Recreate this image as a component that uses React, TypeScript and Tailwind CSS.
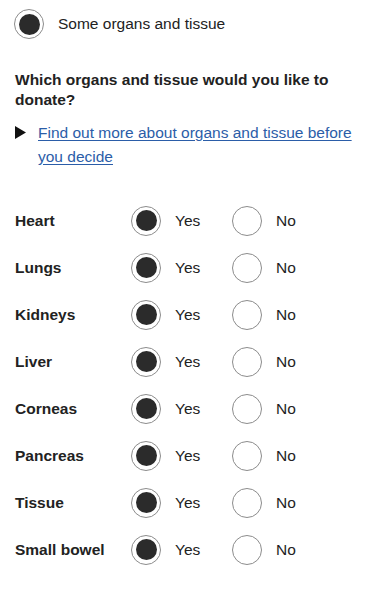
import React from 'react'

const organs = ['Heart', 'Lungs', 'Kidneys', 'Liver', 'Corneas', 'Pancreas', 'Tissue', 'Small bowel']

function Radio({ checked }: { checked?: boolean }) {
  return (
    <span className="flex h-[30px] w-[30px] shrink-0 items-center justify-center rounded-full border border-[#8c8c8c] bg-white">
      {checked && <span className="h-[21px] w-[21px] rounded-full bg-[#2b2b2b]" />}
    </span>
  )
}

export default function App() {
  return (
    <div className="min-h-[600px] bg-white text-[#222222] text-[15.5px]" style={{ fontFamily: '"Liberation Sans", Arial, sans-serif' }}>
      {/* selected option */}
      <div className="flex items-center gap-[14px] pl-[14px] pt-[9px]">
        <Radio checked />
        <span>Some organs and tissue</span>
      </div>

      <h2 className="mt-[31px] px-[15px] font-bold leading-[20px]">
        Which organs and tissue would you like to donate?
      </h2>

      <div className="mt-[11px] flex px-[15px]">
        <span className="w-[23px] shrink-0 pt-[5px]">
          <svg width="11" height="13" viewBox="0 0 11 13">
            <path d="M0 0 L11 6.5 L0 13 Z" fill="#111111" />
          </svg>
        </span>
        <a href="#" className="leading-[24px] text-[#2b5da8] underline underline-offset-2">
          Find out more about organs and tissue before you decide
        </a>
      </div>

      <div className="mt-[28px] flex flex-col px-[15px]">
        {organs.map((name) => (
          <div key={name} className="flex h-[47px] items-center">
            <span className="w-[116px] shrink-0 font-bold">{name}</span>
            <div className="flex w-[101px] items-center gap-[14px]">
              <Radio checked />
              <span>Yes</span>
            </div>
            <div className="flex items-center gap-[14px]">
              <Radio />
              <span>No</span>
            </div>
          </div>
        ))}
      </div>
    </div>
  )
}
